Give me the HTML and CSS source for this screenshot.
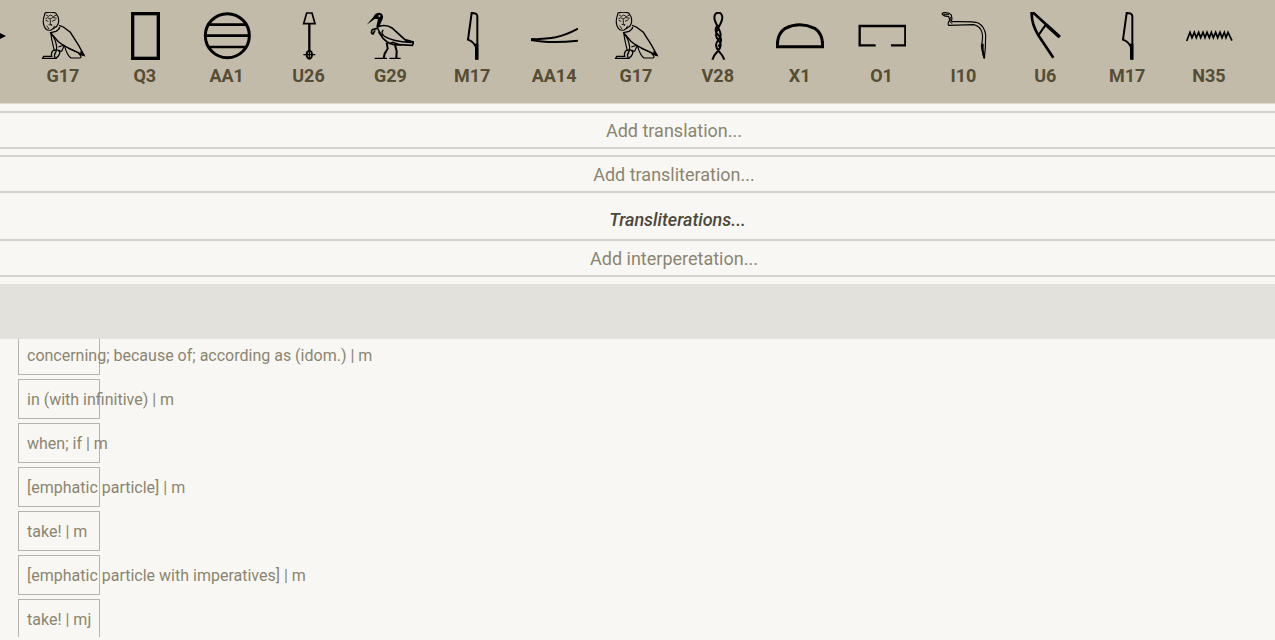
FILE: index.html
```html
<!DOCTYPE html>
<html lang="en">
<head>
<meta charset="utf-8">
<meta name="viewport" content="width=device-width, initial-scale=1">
<title>Hieroglyph translation</title>
<link rel="stylesheet" href="styles.css">
</head>
<body>
<svg class="defs" aria-hidden="true">
  <symbol id="g17" viewBox="12 21 144 144">
    <path d="M30 24Q46 19 62 24L69 35Q73 48 69 57Q66 66 59 68L48 75Q32 79 27 62Q22 48 28 32Z" stroke-width="3.5"/>
    <path d="M33 30L40 34L47 30L55 35L64 30M31 42Q38 34 45 42Q52 34 65 40M32 46L40 49M51 49L62 44M46 43V58M41 59H51L48 63M35 62L42 72M59 62L53 72" stroke-width="2.5"/>
    <path d="M72 61L85 66L106 82L131 121L147 151L109 133Q83 122 68 108L47 83L63 79Q73 74 74 66" stroke-width="4"/>
    <path d="M47 82Q50 106 55 124L58 138M49 87Q62 101 65 126L63 141M99 130Q124 140 146 152M88 121L80 139M88 121Q96 151 108 159H135Q143 155 131 146M80 139L69 137M70 126L88 120" stroke-width="3.5"/>
    <path d="M56 135Q47 142 50 154H26L23 160H63L70 153Q77 143 73 137Q64 132 56 137M63 140Q56 149 60 158" stroke-width="4"/>
    <path d="M137 139L147 151" stroke-width="6"/>
  </symbol>
  <symbol id="q3" viewBox="363 36 144 144"><rect x="398" y="41" width="77" height="134" stroke-width="10"/></symbol>
  <symbol id="aa1" viewBox="609 36 144 144"><circle cx="682" cy="107" r="66" stroke-width="9"/><path d="M628 74H736M617 107H747M628 141H736" stroke-width="8"/></symbol>
  <symbol id="u26" viewBox="75 36 144 144"><path d="M140 39H156L165 71H131Z" stroke-width="5"/><path d="M148 71V151" stroke-width="7"/><ellipse cx="148" cy="164" rx="8" ry="12" stroke-width="6"/><path d="M130 164H166M148 154V174" stroke-width="4"/></symbol>
  <symbol id="g29" viewBox="20 21 144 144">
    <path class="fill" d="M22 59L42 36Q47 23 61 23Q73 27 71 39L63 58L57 70Q64 83 72 95L64 90Q54 78 51 64L56 42L46 42Z"/>
    <circle class="eye" cx="60" cy="33" r="3"/>
    <path d="M58 64Q81 57 98 69L137 104L163 111L159 121L119 119Q92 122 72 101L58 81M53 70L39 74Q33 86 41 87L47 76" stroke-width="5"/>
    <path d="M72 75Q62 84 77 95Q98 109 156 113M88 117L100 112L119 118M137 107L161 112" stroke-width="4"/>
    <path d="M82 113L85 131L76 146L73 160M107 120L112 138L111 159" stroke-width="6"/>
    <path d="M46 160H83M90 160H124" stroke-width="4"/>
  </symbol>
  <symbol id="m17" viewBox="565 36 144 144"><path d="M653 179V49Q653 39 636 39L625 119Q644 126 650 145" stroke-width="6"/><path d="M651 131V179" stroke-width="10"/></symbol>
  <symbol id="aa14" viewBox="90 36 144 144"><path d="M94 119Q145 116 167 112Q199 105 234 86M94 119Q146 132 234 122" stroke-width="6"/><path d="M93 119H106" stroke-width="9"/></symbol>
  <symbol id="v28" viewBox="582 36 144 144"><path d="M637 179C644 155 661 154 662 136C662 121 648 119 648 105C648 88 666 72 667 53C667 33 643 33 643 53C644 72 662 88 662 105C662 119 648 121 648 136C649 154 665 155 673 179M655 75C644 83 644 96 655 105C666 113 666 127 655 140" stroke-width="6"/></symbol>
  <symbol id="x1" viewBox="48 36 144 144"><path d="M52 140Q51 101 76 85Q119 64 164 85Q189 101 188 140Z" stroke-width="9"/></symbol>
  <symbol id="o1" viewBox="292 36 144 144"><path d="M345 136H297V78H434V136H391" stroke-width="7"/></symbol>
  <symbol id="i10" viewBox="12 21 144 144">
    <path d="M51 42L49 30Q43 22 29 23Q19 24 22 28Q27 35 41 34L44 45Q37 55 41 61L116 59Q137 64 141 83Q145 98 139 124L144 148L148 161L151 128L152 89Q148 64 130 54Q119 49 51 50Q48 47 51 42Z" stroke-width="3.5"/>
    <path d="M26 28H42M46 36L45 51L52 56" stroke-width="3"/>
    <path d="M143 116V135L148 159" stroke-width="6"/>
  </symbol>
  <symbol id="u6" viewBox="3 21 144 144"><path d="M31 25H42L119 96M35 26Q35 57 55 91L100 158" stroke-width="8"/><path d="M78 58L55 91" stroke-width="6"/><path d="M78 59L119 96" stroke-width="10"/></symbol>
  <symbol id="n35" viewBox="555 36 144 144"><path d="M560 123L570 97L576 113L583 97L589 113L596 97L602 113L609 97L615 113L621 97L628 113L634 97L640 113L647 97L653 113L660 97L666 113L673 97L678 113L684 97L696 122" stroke-width="5"/></symbol>
</svg>

<header class="signs">
  <span class="pointer" aria-hidden="true"></span>
  <ul class="sign-list">
    <li class="sign"><svg class="glyph"><use href="#g17"/></svg><span>G17</span></li>
    <li class="sign"><svg class="glyph"><use href="#q3"/></svg><span>Q3</span></li>
    <li class="sign"><svg class="glyph"><use href="#aa1"/></svg><span>AA1</span></li>
    <li class="sign"><svg class="glyph"><use href="#u26"/></svg><span>U26</span></li>
    <li class="sign"><svg class="glyph"><use href="#g29"/></svg><span>G29</span></li>
    <li class="sign"><svg class="glyph"><use href="#m17"/></svg><span>M17</span></li>
    <li class="sign"><svg class="glyph"><use href="#aa14"/></svg><span>AA14</span></li>
    <li class="sign"><svg class="glyph"><use href="#g17"/></svg><span>G17</span></li>
    <li class="sign"><svg class="glyph"><use href="#v28"/></svg><span>V28</span></li>
    <li class="sign"><svg class="glyph"><use href="#x1"/></svg><span>X1</span></li>
    <li class="sign"><svg class="glyph"><use href="#o1"/></svg><span>O1</span></li>
    <li class="sign"><svg class="glyph"><use href="#i10"/></svg><span>I10</span></li>
    <li class="sign"><svg class="glyph"><use href="#u6"/></svg><span>U6</span></li>
    <li class="sign"><svg class="glyph"><use href="#m17"/></svg><span>M17</span></li>
    <li class="sign"><svg class="glyph"><use href="#n35"/></svg><span>N35</span></li>
  </ul>
</header>

<main class="editor">
  <form class="fields">
    <input class="field" type="text" aria-label="Translation" placeholder="Add translation...">
    <input class="field" type="text" aria-label="Transliteration" placeholder="Add transliteration...">
  </form>
  <p class="heading">Transliterations...</p>
  <input class="field" type="text" aria-label="Interpretation" placeholder="Add interperetation...">
  <div class="band"></div>
  <div class="meanings">
    <button class="meaning" type="button">concerning; because of; according as (idom.) | m</button>
    <button class="meaning" type="button">in (with infinitive) | m</button>
    <button class="meaning" type="button">when; if | m</button>
    <button class="meaning" type="button">[emphatic particle] | m</button>
    <button class="meaning" type="button">take! | m</button>
    <button class="meaning" type="button">[emphatic particle with imperatives] | m</button>
    <button class="meaning" type="button">take! | mj</button>
  </div>
</main>
</body>
</html>
```

FILE: styles.css
```css
* {
  box-sizing: border-box;
}

body {
  display: flex;
  flex-direction: column;
  height: 100vh;
  margin: 0;
  overflow: hidden;
  background: #f8f7f3;
  color: #8b8570;
  font-family: Roboto, "Liberation Sans", sans-serif;
  font-size: 18px;
}

.defs {
  position: absolute;
  width: 0;
  height: 0;
}

.signs {
  display: flex;
  padding: 12px 25px 15px 0;
  border-bottom: 1px solid #ddd8cd;
  background: #c3bba9;
}

.pointer {
  width: 6px;
  height: 6px;
  margin: 21px 16px 0 0;
  background: #000;
  clip-path: polygon(0 0, 100% 50%, 0 100%);
}

.sign-list {
  display: flex;
  flex: 1;
  margin: 0;
  padding: 0;
  list-style: none;
}

.sign {
  display: flex;
  flex: 1 1 0;
  flex-direction: column;
  align-items: center;
  gap: 4px;
  min-width: 0;
  color: #564d35;
  font-weight: 700;
  line-height: 24px;
}

.glyph {
  width: 48px;
  height: 48px;
  fill: none;
  stroke: #000;
  overflow: visible;
}

.fill {
  fill: #000;
  stroke: none;
}

.eye {
  fill: #c3bba9;
  stroke: none;
}

.editor {
  display: flex;
  flex: 1;
  flex-direction: column;
  min-height: 0;
  padding: 7px 0 3px;
}

.fields {
  display: flex;
  flex-direction: column;
  gap: 6px;
}

.field {
  width: 100%;
  height: 38px;
  flex: none;
  padding: 0 0 0 73px;
  border: solid #d3d2ce;
  border-width: 2px 0;
  border-radius: 0;
  outline: none;
  background: transparent;
  color: #564d35;
  font: inherit;
  line-height: 24px;
  text-align: center;
}

.field::placeholder {
  color: #8b8570;
  opacity: 1;
}

.heading {
  margin: 0;
  padding: 15px 0 7px 80px;
  color: #4b4739;
  font-style: italic;
  font-weight: 500;
  line-height: 24px;
  text-align: center;
}

.band {
  flex: none;
  height: 55px;
  margin-top: 7px;
  background: #e2e1dc;
}

.meanings {
  display: flex;
  flex: 1;
  flex-direction: column;
  gap: 4px;
  min-height: 0;
  padding-left: 18px;
  overflow: hidden;
}

.meaning {
  flex: none;
  width: 82px;
  height: 40px;
  padding: 0 8px;
  border: 1px solid #b5b4ae;
  background: transparent;
  color: #8b8570;
  font: inherit;
  font-size: 16px;
  text-align: left;
  white-space: nowrap;
}

.meaning:first-child {
  margin-top: -4px;
}
```
